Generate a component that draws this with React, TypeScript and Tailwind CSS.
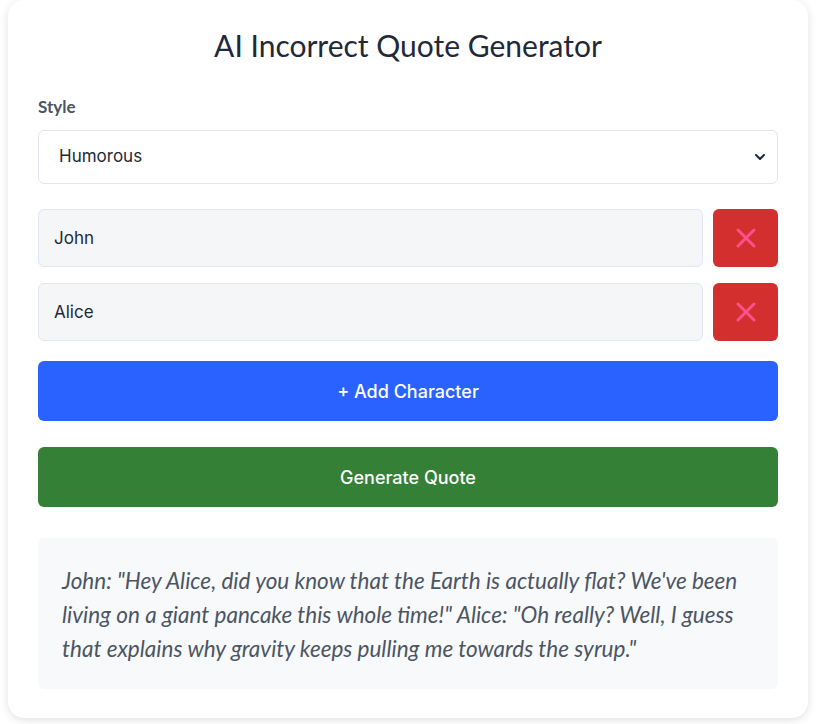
import React, { useState } from 'react';

const calibri = { fontFamily: 'Lato, "Open Sans", sans-serif' };
const mont = { fontFamily: 'Inter, "Noto Sans", sans-serif' };

export default function App() {
  const [style, setStyle] = useState('Humorous');
  const [characters, setCharacters] = useState(['John', 'Alice']);

  const quote =
    'John: "Hey Alice, did you know that the Earth is actually flat? We\'ve been living on a giant pancake this whole time!" Alice: "Oh really? Well, I guess that explains why gravity keeps pulling me towards the syrup."';

  return (
    <div className="min-h-screen bg-white pl-2 pr-[10px]">
      <div className="rounded-2xl bg-white px-[30px] pt-[24px] pb-[29px] shadow-[0_2px_10px_rgba(0,0,0,0.12)]">
        <h1 className="text-center text-[30px] leading-[42px] text-[#1f2937]" style={calibri}>
          AI Incorrect Quote Generator
        </h1>

        <label className="mt-[29px] block text-[17px] font-bold leading-6 text-[#4b5563]" style={calibri}>
          Style
        </label>
        <div className="relative mt-[11px]">
          <select
            value={style}
            onChange={e => setStyle(e.target.value)}
            className="h-[54px] w-full appearance-none rounded-md border border-[#e2e6ee] bg-white pl-5 text-[17px] text-[#1f2937] outline-none"
            style={mont}
          >
            <option>Humorous</option>
            <option>Dramatic</option>
            <option>Romantic</option>
          </select>
          <svg className="pointer-events-none absolute right-[12px] top-1/2 -translate-y-1/2" width="12" height="12" viewBox="0 0 12 12">
            <path d="M2 4l4 4 4-4" fill="none" stroke="#1f2937" strokeWidth="2" strokeLinecap="round" strokeLinejoin="round" />
          </svg>
        </div>

        <div className="mt-[25px] flex flex-col gap-4">
          {characters.map((c, i) => (
            <div key={i} className="flex gap-[10px]">
              <input
                value={c}
                onChange={e => setCharacters(characters.map((x, j) => (j === i ? e.target.value : x)))}
                className="h-[58px] flex-1 rounded-md border border-[#e2e6ee] bg-[#f5f6f8] px-[15px] text-[17px] text-[#1f2937] outline-none"
                style={mont}
              />
              <button
                onClick={() => setCharacters(characters.filter((_, j) => j !== i))}
                className="flex h-[58px] w-[65px] items-center justify-center rounded-md bg-[#d32f2f]"
              >
                <svg width="22" height="22" viewBox="0 0 22 22">
                  <path d="M3 3l16 16M19 3L3 19" stroke="#ff4f8b" strokeWidth="3" strokeLinecap="round" />
                </svg>
              </button>
            </div>
          ))}
        </div>

        <button
          onClick={() => setCharacters([...characters, ''])}
          className="mt-5 h-[60px] w-full rounded-md bg-[#2962ff] text-[18px] font-medium text-white"
          style={mont}
        >
          + Add Character
        </button>

        <button
          className="mt-[26px] h-[60px] w-full rounded-md bg-[#358037] text-[18px] font-medium text-white"
          style={mont}
        >
          Generate Quote
        </button>

        <div className="mt-[31px] rounded-md bg-[#f8f9fb] px-6 pt-[26px] pb-[23px]">
          <p className="text-[22.5px] italic leading-[34px] text-[#4b5563]" style={calibri}>
            {quote}
          </p>
        </div>
      </div>
    </div>
  );
}
